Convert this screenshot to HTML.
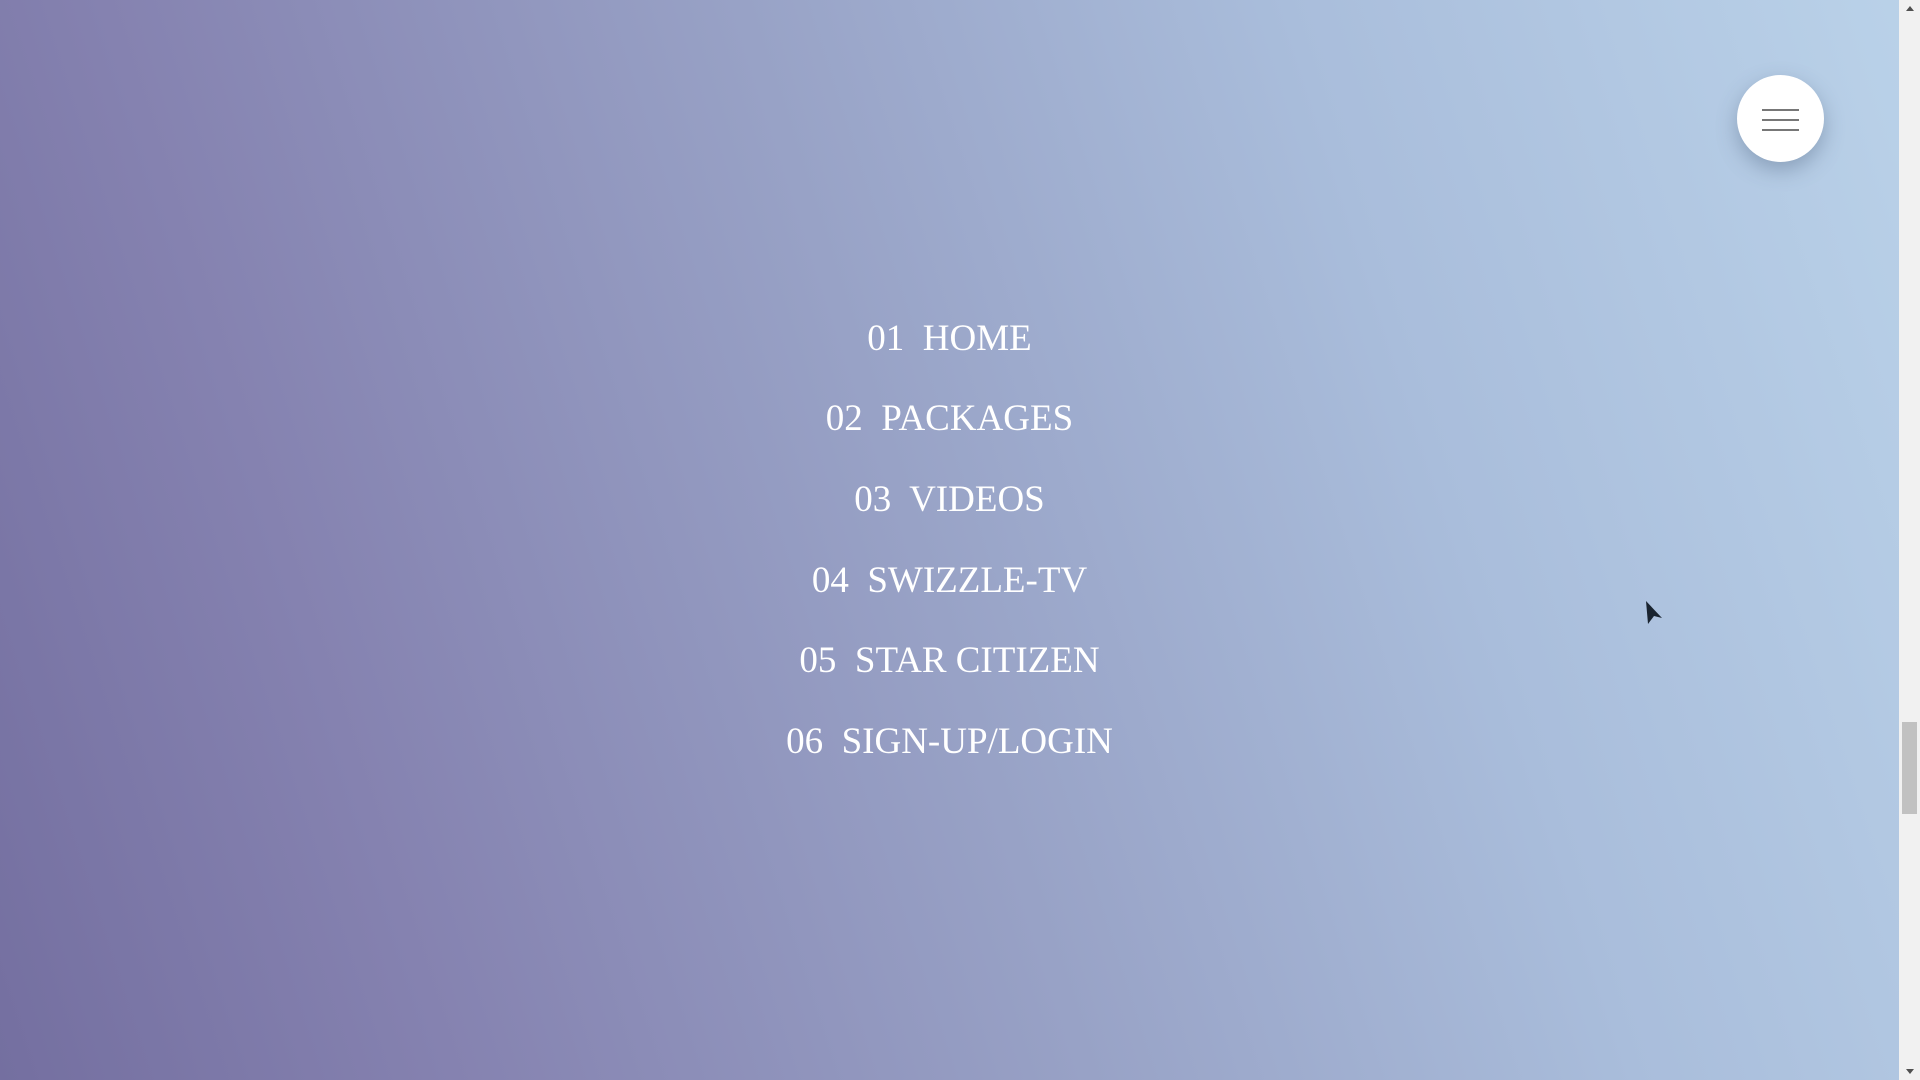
<!DOCTYPE html>
<html><head><meta charset="utf-8"><style>
html,body{margin:0;padding:0;width:1920px;height:1080px;overflow:hidden}
body{position:relative;background:linear-gradient(72deg,#746fa0 0%,#8582b0 20%,#98a2c6 48%,#a9bddb 72%,#bad2e9 100%);font-family:"Liberation Serif",serif}
.menu{position:absolute;left:0;width:1899px;text-align:center;color:#fff;font-size:37px;line-height:1}
.menu div{position:absolute;left:0;width:1899px;white-space:pre}
.btn{position:absolute;left:1737px;top:75px;width:87px;height:87px;border-radius:50%;background:#fff;box-shadow:0 8px 20px rgba(60,80,110,.35)}
.btn i{position:absolute;left:25px;width:37px;height:2px;background:#777}
.sb{position:absolute;left:1899px;top:0;width:21px;height:1080px;background:#f1f1f1}
.th{position:absolute;left:1902px;top:722px;width:15px;height:92px;background:#c1c1c1}
</style></head><body>
<div class="menu">
<div style="top:320px">01  HOME</div>
<div style="top:400px">02  PACKAGES</div>
<div style="top:481px">03  VIDEOS</div>
<div style="top:562px">04  SWIZZLE-TV</div>
<div style="top:642px">05  STAR CITIZEN</div>
<div style="top:723px">06  SIGN-UP/LOGIN</div>
</div>
<div class="btn"><i style="top:34px"></i><i style="top:44px"></i><i style="top:54px"></i></div>
<svg style="position:absolute;left:1644px;top:600px" width="20" height="26"><path d="M2 1 L18 18 L10 16 L4 24 Z" fill="#1a2430"/></svg>
<div class="sb"></div><div class="th"></div>
<svg style="position:absolute;left:1904px;top:4px" width="12" height="8"><path d="M2 7L6 2L10 7Z" fill="#505050"/></svg>
<svg style="position:absolute;left:1904px;top:1068px" width="12" height="8"><path d="M2 1L6 6L10 1Z" fill="#505050"/></svg>
</body></html>
